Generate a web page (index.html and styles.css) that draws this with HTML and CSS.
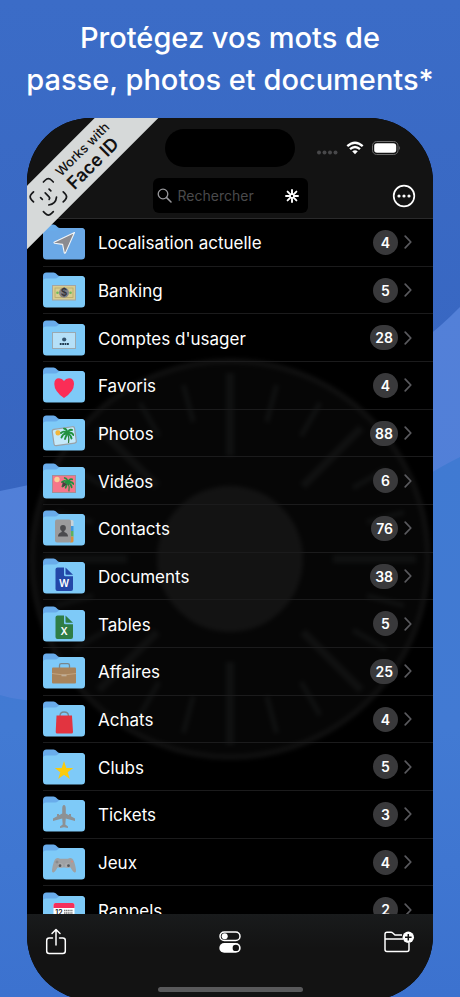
FILE: index.html
```html
<!DOCTYPE html>
<html lang="fr">
<head>
    <meta charset="UTF-8">
    <meta name="viewport" content="width=device-width, initial-scale=1.0">
    <title>Protégez vos mots de passe</title>
    <link rel="stylesheet" href="styles.css">
</head>
<body>

    <!-- Blue waves behind the phone -->
    <svg class="waves" viewBox="0 0 460 997" preserveAspectRatio="none" aria-hidden="true">
        <defs>
            <linearGradient id="wave" x1="0" y1="0" x2="0" y2="1">
                <stop offset="0" stop-color="#5380d8"/>
                <stop offset="1" stop-color="#4c7ed8"/>
            </linearGradient>
            <linearGradient id="low" x1="0" y1="0" x2="0" y2="1">
                <stop offset="0" stop-color="#407ad2"/>
                <stop offset=".5" stop-color="#427ad3"/>
                <stop offset="1" stop-color="#3c72cf"/>
            </linearGradient>
        </defs>
        <path d="M0 491C150 460 350 420 460 307V997H0Z" fill="url(#wave)"/>
        <path d="M0 695C150 740 330 520 460 457V997H0Z" fill="url(#low)"/>
    </svg>

    <!-- Shared shapes -->
    <svg class="sprite" aria-hidden="true">
        <symbol id="folder" viewBox="0 0 42 36">
            <path class="folder-back" d="M0 4Q0 .5 3.500 .5H10.500Q12.500 .5 13.500 2L14.500 3Q15.500 4 17 4H38Q42 4 42 8V20H0Z"/>
            <path class="folder-front" d="M0 9Q0 6.500 3 6.500H12Q14 6.500 15 5.200Q16 4 18 4H38.500Q42 4 42 7.500V32Q42 35.500 38.500 35.500H3.500Q0 35.500 0 32Z"/>
        </symbol>
        <symbol id="chevron" viewBox="0 0 8 14">
            <path d="M1.200 1.200L6.800 7L1.200 12.800" fill="none" stroke="#5a5a5e" stroke-width="1.700" stroke-linecap="round" stroke-linejoin="round"/>
        </symbol>
        <symbol id="palm" viewBox="0 0 14 16">
            <path d="M7.500 6Q9.500 10 8.500 15.500" fill="none" stroke="#2f7a3c" stroke-width="1.200"/>
            <path d="M7.500 6Q4 2.500 1 5.500M7.500 6Q3 5.500 1.500 10M7.500 6Q6 8 5 11.500M7.500 6Q7 1.500 4 1M7.500 6Q9 1.500 12 2.500M7.500 6Q11.500 4 13.500 7.500M7.500 6Q11 7.500 11.500 11" fill="none" stroke="#229140" stroke-width="1.900" stroke-linecap="round"/>
        </symbol>
    </svg>

    <h1>Protégez vos mots de<br>passe, photos et documents*</h1>

    <div class="phone">

        <!-- Safe dial behind the list -->
        <svg class="dial" viewBox="-210 -210 420 420" aria-hidden="true">
            <defs>
                <g id="ticks">
                    <path d="M0 -103V-186" stroke-width="8"/>
                    <path d="M0 -142V-180" stroke-width="5" transform="rotate(15)"/>
                    <path d="M0 -142V-180" stroke-width="5" transform="rotate(30)"/>
                    <path d="M73 -73L131 -131" stroke-width="8"/>
                    <path d="M0 -142V-180" stroke-width="5" transform="rotate(60)"/>
                    <path d="M0 -142V-180" stroke-width="5" transform="rotate(75)"/>
                </g>
            </defs>
            <circle r="198" fill="#060606" stroke="#111111" stroke-width="5"/>
            <g stroke="#101111">
                <use href="#ticks"/>
                <use href="#ticks" transform="rotate(90)"/>
                <use href="#ticks" transform="rotate(180)"/>
                <use href="#ticks" transform="rotate(270)"/>
            </g>
            <circle r="73" fill="#131313"/>
        </svg>

        <header class="top">
            <div class="status">
                <div class="island"></div>
                <div class="signals">
                    <svg width="22" height="16" viewBox="0 0 22 16" aria-hidden="true">
                        <g fill="#48484a"><circle cx="3" cy="12.500" r="2"/><circle cx="8.500" cy="12.500" r="2"/><circle cx="14" cy="12.500" r="2"/><circle cx="19.500" cy="12.500" r="2"/></g>
                    </svg>
                    <svg width="18" height="14" viewBox="0 0 18 14" aria-hidden="true">
                        <path d="M1.300 5.200Q9 -1.800 16.700 5.200M4 8.200Q9 3.700 14 8.200" fill="none" stroke="#fff" stroke-width="2.300"/>
                        <path d="M6.200 10.300Q9 8 11.800 10.300L9 13.300Z" fill="#fff"/>
                    </svg>
                    <svg width="29" height="14" viewBox="0 0 29 14" aria-hidden="true">
                        <rect x=".5" y=".5" width="25.500" height="13" rx="4.200" fill="none" stroke="#6b6b6b"/>
                        <rect x="2.200" y="2.200" width="22" height="9.600" rx="2.800" fill="#fff"/>
                        <path d="M27.200 4.800Q29 7 27.200 9.200Z" fill="#6b6b6b"/>
                    </svg>
                </div>
            </div>
            <div class="nav">
                <label class="search">
                    <svg width="15" height="15" viewBox="0 0 15 15" aria-hidden="true">
                        <circle cx="6" cy="6" r="4.800" fill="none" stroke="#98989c" stroke-width="1.300"/>
                        <path d="M9.600 9.600L14 14" stroke="#98989c" stroke-width="1.500" stroke-linecap="round"/>
                    </svg>
                    <input type="search" placeholder="Rechercher" aria-label="Rechercher">
                    <svg width="14" height="14" viewBox="-7 -7 14 14" aria-hidden="true">
                        <path d="M0 -2V-6M0 2V6M-2 0H-6M2 0H6M-1.400 -1.400L-4.400 -4.400M1.400 1.400L4.400 4.400M-1.400 1.400L-4.400 4.400M1.400 -1.400L4.400 -4.400" stroke="#fff" stroke-width="1.900" stroke-linecap="round"/>
                        <circle r="1.900" fill="none" stroke="#fff" stroke-width="1.100"/>
                    </svg>
                </label>
                <button class="more" type="button" aria-label="Options">
                    <svg width="24" height="24" viewBox="0 0 24 24" aria-hidden="true">
                        <circle cx="12" cy="12" r="10.300" fill="none" stroke="#fff" stroke-width="1.700"/>
                        <g fill="#fff"><circle cx="7" cy="12" r="1.600"/><circle cx="12" cy="12" r="1.600"/><circle cx="17" cy="12" r="1.600"/></g>
                    </svg>
                </button>
            </div>
        </header>

        <ul class="list">
            <li><a class="row current" href="#">
                <svg class="icon" viewBox="0 0 42 36" aria-hidden="true"><use href="#folder"/>
                    <path d="M31.500 8.500L11 18.200Q10.800 19 11.500 19.200L19.600 20.400L21.300 28.800Q21.900 29.600 22.600 28.600Z" fill="#8b8b90" stroke="#f2f5f8" stroke-width="1.100" stroke-linejoin="round"/></svg>
                <span class="name">Localisation actuelle</span><span class="count">4</span>
                <svg class="chevron"><use href="#chevron"/></svg></a></li>
            <li><a class="row" href="#">
                <svg class="icon" viewBox="0 0 42 36" aria-hidden="true"><use href="#folder"/>
                    <rect x="9.500" y="13.500" width="23" height="14.500" fill="#d8cd92" stroke="#a5a5a0"/>
                    <rect x="12" y="16" width="18" height="9.500" fill="none" stroke="#b5a96a" stroke-width=".8"/>
                    <circle cx="14.500" cy="20.700" r="1.300" fill="#6dbb5c"/><circle cx="27.500" cy="20.700" r="1.300" fill="#6dbb5c"/>
                    <circle cx="21" cy="20.700" r="5" fill="#83838a"/>
                    <text x="21" y="24.200" class="glyph" fill="#33343a">$</text></svg>
                <span class="name">Banking</span><span class="count">5</span>
                <svg class="chevron"><use href="#chevron"/></svg></a></li>
            <li><a class="row" href="#">
                <svg class="icon" viewBox="0 0 42 36" aria-hidden="true"><use href="#folder"/>
                    <rect x="9.500" y="12.500" width="23" height="16" fill="#b5e0f8" stroke="#9aa9b1"/>
                    <circle cx="21.200" cy="19.500" r="2.100" fill="#33536e"/>
                    <path d="M16.800 24H26" stroke="#203a50" stroke-width="1.800" stroke-dasharray="1.800 .6"/></svg>
                <span class="name">Comptes d'usager</span><span class="count">28</span>
                <svg class="chevron"><use href="#chevron"/></svg></a></li>
            <li><a class="row" href="#">
                <svg class="icon" viewBox="0 0 42 36" aria-hidden="true"><use href="#folder"/>
                    <path d="M21 31Q11.300 24.500 11.300 17Q11.300 11.300 16 11.300Q19.300 11.300 21 14Q22.700 11.300 26 11.300Q31 11.300 31 17Q31 24.500 21 31Z" fill="#fb2d56"/></svg>
                <span class="name">Favoris</span><span class="count">4</span>
                <svg class="chevron"><use href="#chevron"/></svg></a></li>
            <li><a class="row" href="#">
                <svg class="icon" viewBox="0 0 42 36" aria-hidden="true"><use href="#folder"/>
                    <g transform="rotate(-8 21 21)">
                        <rect x="10" y="13" width="22.500" height="16.500" rx="2" fill="#c4e9fb" stroke="#9aa1a6" stroke-width="1.200"/>
                        <circle cx="15.500" cy="17" r="2.600" fill="#f3b63b"/>
                    </g>
                    <use href="#palm" x="17" y="12.500" width="14" height="16"/></svg>
                <span class="name">Photos</span><span class="count">88</span>
                <svg class="chevron"><use href="#chevron"/></svg></a></li>
            <li><a class="row" href="#">
                <svg class="icon" viewBox="0 0 42 36" aria-hidden="true"><use href="#folder"/>
                    <rect x="9.500" y="12.500" width="23" height="17" fill="#f5768a" stroke="#a48d95"/>
                    <circle cx="14" cy="16.500" r="2.700" fill="#fbcf98"/>
                    <use href="#palm" x="18" y="14" width="13" height="15"/>
                    <path d="M19.500 18.500V24.500L24 21.500Z" fill="#4a3b42"/></svg>
                <span class="name">Vidéos</span><span class="count">6</span>
                <svg class="chevron"><use href="#chevron"/></svg></a></li>
            <li><a class="row" href="#">
                <svg class="icon" viewBox="0 0 42 36" aria-hidden="true"><use href="#folder"/>
                    <path d="M27 10H29Q30.500 10 30.500 11.500V16H27Z" fill="#c8d3da"/>
                    <path d="M27 16H30.500V21H27Z" fill="#3f97dd"/>
                    <path d="M27 21H30.500V26.500H27Z" fill="#5eb15c"/>
                    <path d="M27 26.500H30.500V31Q30.500 32.500 29 32.500H27Z" fill="#d9903f"/>
                    <rect x="12" y="9.500" width="16" height="23" rx="2" fill="#9b9b9c"/>
                    <circle cx="20" cy="18" r="2.900" fill="#4b4b4e"/>
                    <path d="M18.700 20H21.300V22Q25 23 25 26.500H15Q15 23 18.700 22Z" fill="#4b4b4e"/></svg>
                <span class="name">Contacts</span><span class="count">76</span>
                <svg class="chevron"><use href="#chevron"/></svg></a></li>
            <li><a class="row" href="#">
                <svg class="icon" viewBox="0 0 42 36" aria-hidden="true"><use href="#folder"/>
                    <path d="M14.500 9.500H21V17Q21 18.300 22.300 18.300H30V31Q30 33 28 33H14.500Q12.500 33 12.500 31V11.500Q12.500 9.500 14.500 9.500Z" fill="#2347a8"/>
                    <path d="M22.500 9.500L30 16.800H23.500Q22.500 16.800 22.500 15.800Z" fill="#2347a8"/>
                    <text x="21.200" y="28.500" class="glyph" fill="#fff">W</text></svg>
                <span class="name">Documents</span><span class="count">38</span>
                <svg class="chevron"><use href="#chevron"/></svg></a></li>
            <li><a class="row" href="#">
                <svg class="icon" viewBox="0 0 42 36" aria-hidden="true"><use href="#folder"/>
                    <path d="M14.500 9.500H21V17Q21 18.300 22.300 18.300H30V31Q30 33 28 33H14.500Q12.500 33 12.500 31V11.500Q12.500 9.500 14.500 9.500Z" fill="#2f7d46"/>
                    <path d="M22.500 9.500L30 16.800H23.500Q22.500 16.800 22.500 15.800Z" fill="#2f7d46"/>
                    <text x="21.200" y="28.500" class="glyph" fill="#fff">X</text></svg>
                <span class="name">Tables</span><span class="count">5</span>
                <svg class="chevron"><use href="#chevron"/></svg></a></li>
            <li><a class="row" href="#">
                <svg class="icon" viewBox="0 0 42 36" aria-hidden="true"><use href="#folder"/>
                    <path d="M16.500 15V12.500Q16.500 10.700 18.300 10.700H24.700Q26.500 10.700 26.500 12.500V15" fill="none" stroke="#77868c" stroke-width="1.300"/>
                    <rect x="9" y="14.500" width="24" height="16" rx="1" fill="#a8845c"/>
                    <path d="M9 20.500Q21 23.500 33 20.500" fill="none" stroke="#c8ab87" stroke-width=".8"/>
                    <rect x="18.500" y="21.500" width="5" height="1.800" fill="#c0ae97"/></svg>
                <span class="name">Affaires</span><span class="count">25</span>
                <svg class="chevron"><use href="#chevron"/></svg></a></li>
            <li><a class="row" href="#">
                <svg class="icon" viewBox="0 0 42 36" aria-hidden="true"><use href="#folder"/>
                    <path d="M17 15Q17 11 21 11Q25.500 11 25.500 15" fill="none" stroke="#78868e" stroke-width="1.300"/>
                    <path d="M13.500 14.500H29L30 31Q30 32.500 28.500 32.500H14.200Q12.700 32.500 12.700 31Z" fill="#e23440"/></svg>
                <span class="name">Achats</span><span class="count">4</span>
                <svg class="chevron"><use href="#chevron"/></svg></a></li>
            <li><a class="row" href="#">
                <svg class="icon" viewBox="0 0 42 36" aria-hidden="true"><use href="#folder"/>
                    <path d="M21 12L23.300 19H30.300L24.700 23.200L26.800 30L21 25.800L15.200 30L17.300 23.200L11.700 19H18.700Z" fill="#fccb0a"/></svg>
                <span class="name">Clubs</span><span class="count">5</span>
                <svg class="chevron"><use href="#chevron"/></svg></a></li>
            <li><a class="row" href="#">
                <svg class="icon" viewBox="0 0 42 36" aria-hidden="true"><use href="#folder"/>
                    <path d="M21 9Q22.800 9 22.800 13V17.500L32 22.500V25L22.800 22.500L22.300 28.500L25 30.500V32L21 31.200L17 32V30.500L19.700 28.500L19.200 22.500L10 25V22.500L19.200 17.500V13Q19.200 9 21 9Z" fill="#8d9194"/>
                    <path d="M15 18V20.500M27 18V20.500" stroke="#8d9194" stroke-width="2"/></svg>
                <span class="name">Tickets</span><span class="count">3</span>
                <svg class="chevron"><use href="#chevron"/></svg></a></li>
            <li><a class="row" href="#">
                <svg class="icon" viewBox="0 0 42 36" aria-hidden="true"><use href="#folder"/>
                    <path d="M13 14.500Q15 13.500 17 14.800H25Q27 13.500 29 14.500Q31.500 16 33 26Q33.200 29 31.500 28.500Q30 28 27.500 23.500H14.500Q12 28 10.500 28.500Q8.800 29 9 26Q10.500 16 13 14.500Z" fill="#9fa1a3"/>
                    <circle cx="17.500" cy="21.500" r="2.600" fill="#a9abad"/><circle cx="24.500" cy="21.500" r="2.600" fill="#a9abad"/>
                    <circle cx="17" cy="21.700" r="1.400" fill="#55575a"/><circle cx="25.500" cy="21.700" r="1.400" fill="#55575a"/>
                    <circle cx="29" cy="17.500" r=".9" fill="#d98a80"/><path d="M12.500 18H15.500M14 16.500V19.500" stroke="#7c7e80" stroke-width=".8"/></svg>
                <span class="name">Jeux</span><span class="count">4</span>
                <svg class="chevron"><use href="#chevron"/></svg></a></li>
            <li><a class="row" href="#">
                <svg class="icon" viewBox="0 0 42 36" aria-hidden="true"><use href="#folder"/>
                    <rect x="10.500" y="11" width="21" height="21" rx="2" fill="#fff"/>
                    <path d="M10.500 16V13Q10.500 11 12.500 11H29.500Q31.500 11 31.500 13V16Z" fill="#f62f5a"/>
                    <text x="16" y="22.500" class="glyph date" fill="#222">12</text>
                    <path d="M21 18.500H29.500M21 21H29.500" stroke="#777" stroke-width="1.300" stroke-dasharray="1.300 .5"/></svg>
                <span class="name">Rappels</span><span class="count">2</span>
                <svg class="chevron"><use href="#chevron"/></svg></a></li>
        </ul>

        <footer class="toolbar">
            <div class="tools">
                <button type="button" aria-label="Partager">
                    <svg width="22" height="28" viewBox="0 0 22 28" aria-hidden="true">
                        <g fill="none" stroke="#fff" stroke-width="1.500" stroke-linecap="round" stroke-linejoin="round">
                            <path d="M7.500 10H4.200Q1.700 10 1.700 12.500V23Q1.700 25.500 4.200 25.500H17.800Q20.300 25.500 20.300 23V12.500Q20.300 10 17.800 10H14.500"/>
                            <path d="M11 17V1.700M7 5.500L11 1.500L15 5.500"/>
                        </g>
                    </svg>
                </button>
                <button type="button" aria-label="Réglages">
                    <svg width="22" height="22" viewBox="0 0 22 22" aria-hidden="true">
                        <rect x="1" y="1" width="20" height="8.500" rx="4.250" fill="none" stroke="#fff" stroke-width="1.500"/>
                        <circle cx="5.700" cy="5.250" r="3" fill="#fff"/>
                        <rect x=".3" y="12" width="21.400" height="9.800" rx="4.900" fill="#fff"/>
                        <circle cx="16.800" cy="16.900" r="3.200" fill="#131313"/>
                    </svg>
                </button>
                <button type="button" aria-label="Nouveau dossier">
                    <svg width="32" height="24" viewBox="0 0 32 24" aria-hidden="true">
                        <path d="M19 5H12L9.500 2.800Q9 2.300 8 2.300H4Q2 2.300 2 4.300V19.500Q2 21.500 4 21.500H24Q26 21.500 26 19.500V13M2 9H20" fill="none" stroke="#fff" stroke-width="1.500"/>
                        <circle cx="25.300" cy="7.300" r="5.700" fill="#fff"/>
                        <path d="M22 7.300H28.600M25.300 4V10.600" stroke="#131313" stroke-width="1.500"/>
                    </svg>
                </button>
            </div>
            <div class="home"></div>
        </footer>

        <!-- Corner ribbon -->
        <div class="ribbon">
            <svg width="32" height="32" viewBox="0 0 32 32" aria-hidden="true">
                <g fill="none" stroke="#17181a" stroke-width="1.700" stroke-linecap="round">
                    <path d="M2 9V6.500Q2 2 6.500 2H9M23 2H25.500Q30 2 30 6.500V9M30 23V25.500Q30 30 25.500 30H23M9 30H6.500Q2 30 2 25.500V23"/>
                    <path d="M10 11V13.500M22 11V13.500M16.500 11V16.500Q16.500 18.300 14.800 18.300M10.500 22Q16 26.500 21.500 22"/>
                </g>
            </svg>
            <div class="ribbon-text">
                <span>Works with</span>
                <strong>Face ID</strong>
            </div>
        </div>
    </div>

</body>
</html>
```

FILE: styles.css
```css
* {
    box-sizing: border-box;
}
body {
    margin: 0;
    height: 100vh;
    display: flex;
    flex-direction: column;
    position: relative;
    overflow: hidden;
    font-family: Inter, "Liberation Sans", sans-serif;
    color: #fff;
    background: linear-gradient(#3b6cc7, #3765c0 50%);
}
.sprite {
    display: none;
}
.waves {
    position: absolute;
    top: 0;
    left: 0;
    width: 100%;
    height: 100%;
}
h1 {
    position: relative;
    margin: 0;
    padding: 17px 0;
    font-size: 29px;
    line-height: 42px;
    font-weight: 500;
    text-align: center;
}
button {
    padding: 0;
    border: 0;
    background: none;
    display: flex;
}

/* Phone */
.phone {
    flex: 1;
    min-height: 0;
    position: relative;
    display: flex;
    flex-direction: column;
    margin: 0 27px -3px;
    border-radius: 64px;
    overflow: hidden;
    background: #000;
}
.dial {
    position: absolute;
    top: 50%;
    left: 50%;
    width: 420px;
    height: 420px;
    transform: translate(-50%, -50%);
    filter: blur(2px);
}
.top {
    position: relative;
    padding-bottom: 5px;
    background: #131313;
    border-bottom: 1px solid #2a2a2b;
}
.status, .nav {
    display: grid;
    grid-template-columns: 1fr auto 1fr;
    align-items: center;
}
.status {
    height: 60px;
    padding: 0 32px;
}
.island {
    grid-column: 2;
    width: 130px;
    height: 38px;
    border-radius: 19px;
    background: #000;
}
.signals {
    display: flex;
    align-items: center;
    justify-content: flex-end;
    gap: 8px;
}
.nav {
    padding: 0 17px;
}
.search {
    grid-column: 2;
    display: flex;
    align-items: center;
    gap: 6px;
    width: 155px;
    height: 35px;
    padding: 0 9px 0 4px;
    border-radius: 6px;
    background: #000;
}
.search input {
    flex: 1;
    min-width: 0;
    padding: 0;
    border: 0;
    outline: 0;
    background: none;
    font: 14px Inter, sans-serif;
    color: #fff;
}
.search input::placeholder {
    color: #4a4a4c;
}
.more {
    justify-self: end;
}

/* Folder list, the last row runs under the toolbar */
.list {
    flex: 1;
    position: relative;
    display: flex;
    flex-direction: column;
    margin: 0 0 -20px;
    padding: 0 0 0 16px;
    list-style: none;
}
.list li {
    flex: 1;
    display: flex;
    border-bottom: 1px solid #1b1b1c;
}
.row {
    flex: 1;
    display: flex;
    align-items: center;
    padding-right: 21px;
    color: #fff;
    text-decoration: none;
}
.icon {
    width: 42px;
    height: 36px;
}
.folder-back {
    fill: #69aceb;
}
.folder-front {
    fill: var(--front, #7ecaf8);
}
.current {
    --front: #6aa8e6;
}
.glyph {
    font-size: 10px;
    font-weight: 600;
    text-anchor: middle;
}
.date {
    font-size: 7px;
}
.name {
    flex: 1;
    padding: 2px 0 0 13px;
    font-size: 17px;
}
.count {
    min-width: 25px;
    height: 25px;
    padding: 0 5px;
    border-radius: 13px;
    background: #39393b;
    font-size: 14px;
    line-height: 25px;
    font-weight: 600;
    text-align: center;
}
.chevron {
    width: 8px;
    height: 14px;
    margin-left: 6px;
}

/* Toolbar */
.toolbar {
    position: relative;
    height: 86px;
    display: flex;
    flex-direction: column;
    justify-content: space-between;
    align-items: center;
    padding: 14px 18px 8px;
    background: linear-gradient(#191b1c, #131313 40%);
}
.tools {
    width: 100%;
    display: grid;
    grid-template-columns: 1fr auto 1fr;
    align-items: center;
}
.tools button:last-child {
    justify-self: end;
}
.home {
    width: 145px;
    height: 5px;
    border-radius: 3px;
    background: #59595b;
}

/* Ribbon */
.ribbon {
    position: absolute;
    top: 27px;
    left: -50px;
    width: 200px;
    height: 45px;
    display: flex;
    align-items: center;
    gap: 7px;
    padding-left: 43px;
    background: #d6d9d9;
    color: #111;
    transform: rotate(-45deg);
}
.ribbon-text {
    display: flex;
    flex-direction: column;
    font-size: 13px;
    line-height: 16px;
    font-weight: 500;
}
.ribbon-text strong {
    font-size: 18px;
    line-height: 20px;
    font-weight: 600;
}
```
